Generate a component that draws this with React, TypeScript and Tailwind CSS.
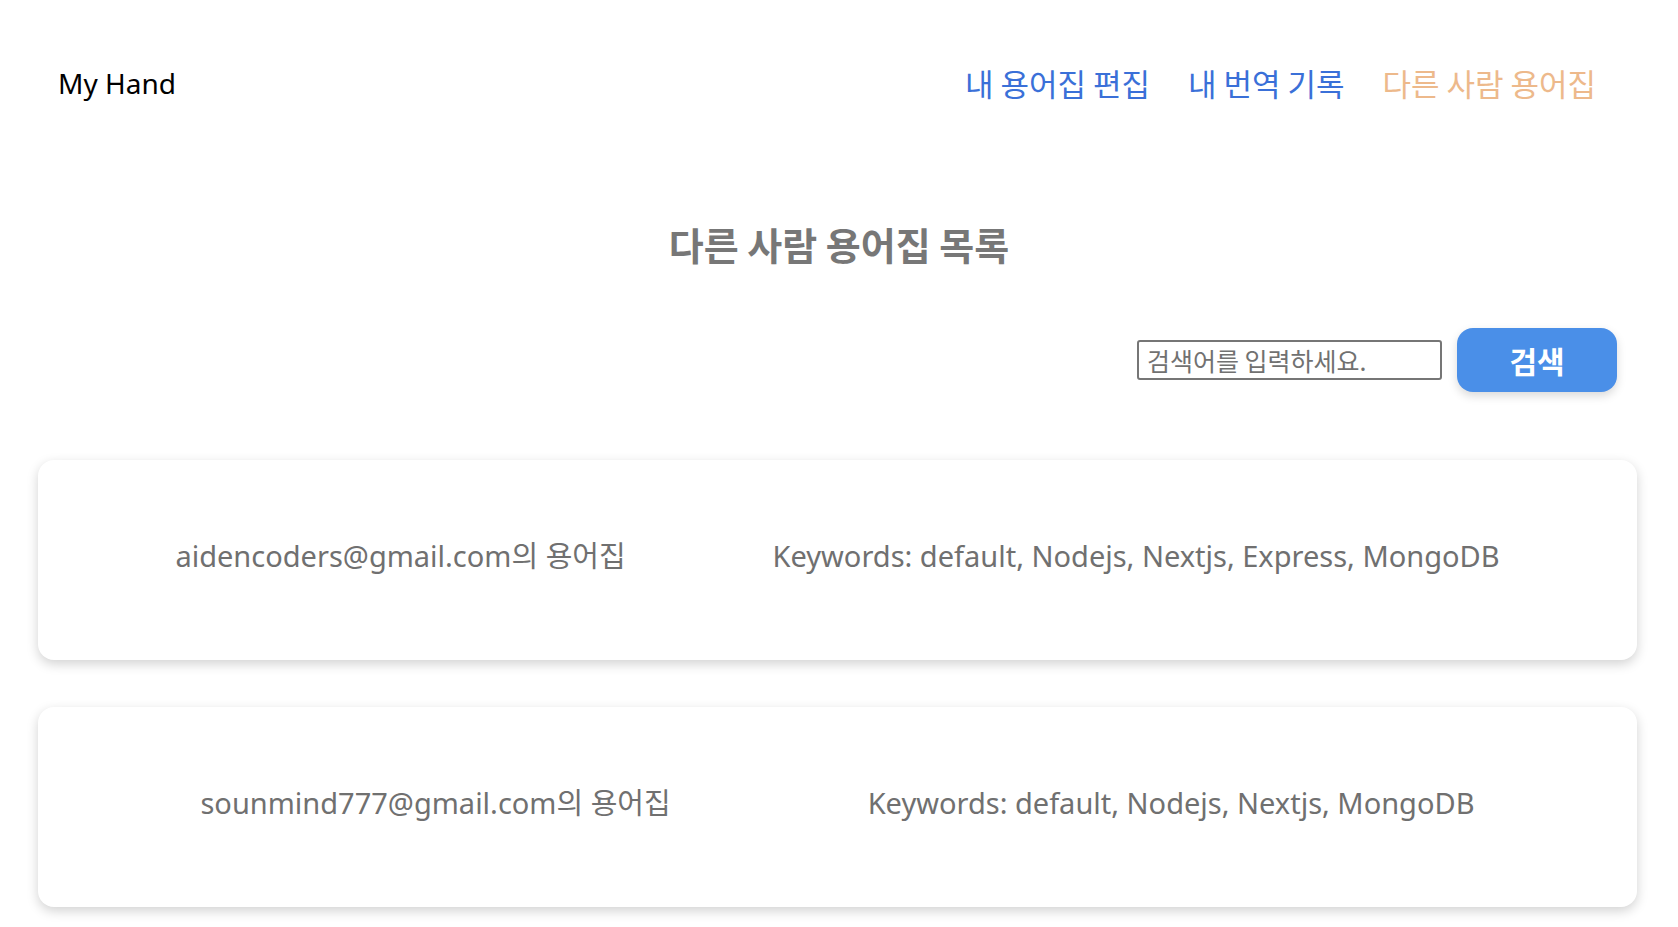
const glossaries = [
	{ email: 'aidencoders@gmail.com', keywords: ['default', 'Nodejs', 'Nextjs', 'Express', 'MongoDB'] },
	{ email: 'sounmind777@gmail.com', keywords: ['default', 'Nodejs', 'Nextjs', 'MongoDB'] },
];

const font = "font-['Noto_Sans','Noto_Sans_CJK_KR',sans-serif]";

export default function App() {
	return (
		<div className={`min-h-[927px] bg-white ${font}`}>
			<header className="flex h-[166px] items-center justify-between pl-[58px] pr-[82px]">
				<h1 className="text-[28px] font-normal text-black">My Hand</h1>
				<nav className="flex items-center gap-[38px] text-[31px] font-['Noto_Sans_CJK_KR',sans-serif]">
					<a className="text-[#3a70d8]">내 용어집 편집</a>
					<a className="text-[#3a70d8]">내 번역 기록</a>
					<a className="text-[#edb98b]">다른 사람 용어집</a>
				</nav>
			</header>

			<h2 className="mt-[50px] text-center text-[38px] leading-[56px] font-bold text-[#777777] font-['Noto_Sans_CJK_KR',sans-serif]">
				다른 사람 용어집 목록
			</h2>

			<div className="mt-[56px] flex items-center justify-end gap-[15px] pr-[61px]">
				<input
					type="text"
					placeholder="검색어를 입력하세요."
					className="h-[40px] w-[305px] rounded-[3px] border-2 border-[#767676] px-2 text-[25px] text-[#555] outline-none placeholder:text-[#717171] font-['Noto_Sans_CJK_KR',sans-serif]"
				/>
				<button className="h-[64px] w-[160px] rounded-2xl bg-[#4a8fe8] text-[30px] font-bold text-white shadow-[0_4px_10px_rgba(0,0,0,0.15)] font-['Noto_Sans_CJK_KR',sans-serif]">
					검색
				</button>
			</div>

			<section className="mt-[68px] flex flex-col gap-[47px] pl-[38px] pr-[41px] pb-10">
				{glossaries.map((g) => (
					<div
						key={g.email}
						className="flex h-[200px] items-center justify-around rounded-2xl bg-white px-16 pb-2 text-[29px] text-[#707070] shadow-[0_4px_12px_rgba(0,0,0,0.18)]">
						<p>{g.email}의 용어집</p>
						<p>Keywords: {g.keywords.join(', ')}</p>
					</div>
				))}
			</section>
		</div>
	);
}
